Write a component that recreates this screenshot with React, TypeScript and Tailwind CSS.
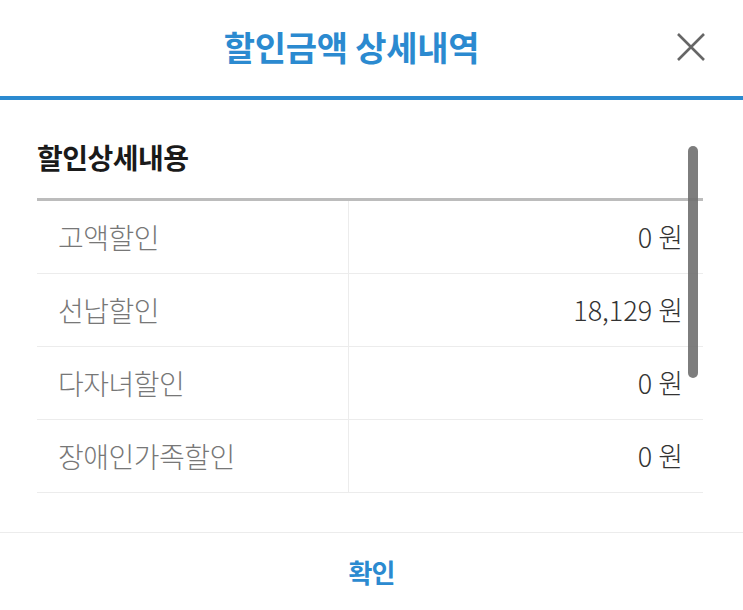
import React from "react";

const rows = [
  { label: "고액할인", value: "0 원" },
  { label: "선납할인", value: "18,129 원" },
  { label: "다자녀할인", value: "0 원" },
  { label: "장애인가족할인", value: "0 원" },
];

export default function App() {
  return (
    <div
      className="w-[743px] h-[610px] bg-white flex flex-col overflow-hidden"
      style={{ fontFamily: '"Noto Sans CJK KR", "Noto Sans", sans-serif' }}
    >
      <div className="relative h-[96px] flex items-center justify-center pr-[40px] shrink-0">
        <h1 className="text-[34px] font-bold text-[#2b8ad0] tracking-[-0.25px] leading-none pb-[2px]">
          할인금액 상세내역
        </h1>
        <svg
          className="absolute left-[675px] top-[31px]"
          width="32"
          height="32"
          viewBox="0 0 32 32"
        >
          <path d="M3 3 L29 29 M29 3 L3 29" stroke="#666" strokeWidth="2.6" strokeLinecap="butt" />
        </svg>
      </div>
      <div className="h-[4px] bg-[#2b8ad0] shrink-0" />
      <div className="relative flex-1 px-[37px] pt-[43px]">
        <h2 className="text-[28px] font-bold text-[#1a1a1a] tracking-[-0.5px] leading-none h-[55px]">
          할인상세내용
        </h2>
        <div className="w-[666px] border-t-[3px] border-[#bcbcbc]">
          {rows.map((r) => (
            <div key={r.label} className="flex h-[73px] border-b border-[#ececec]">
              <div className="w-[312px] border-r border-[#ececec] flex items-center pl-[21px] text-[28px] font-light text-[#777] tracking-[-0.5px]">
                {r.label}
              </div>
              <div className="flex-1 flex items-center justify-end pr-[20px] text-[27px] font-light text-[#333]">
                {r.value}
              </div>
            </div>
          ))}
        </div>
        <div className="absolute left-[688px] top-[46px] w-[10px] h-[232px] rounded-full bg-[#6f6f6f]/90" />
      </div>
      <div className="h-[78px] border-t border-[#ececec] flex items-center justify-center shrink-0">
        <span className="text-[26px] font-bold text-[#2b8ad0] tracking-[-1px] leading-none">확인</span>
      </div>
    </div>
  );
}
